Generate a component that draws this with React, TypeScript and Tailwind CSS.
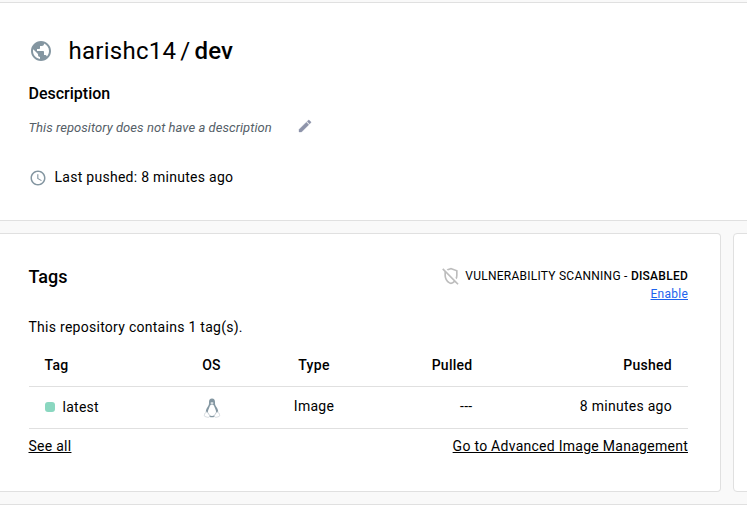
import { MdPublic, MdAccessTime, MdOutlineRemoveModerator } from 'react-icons/md';

function Pencil() {
  return (
    <svg className="mb-1 ml-[25.500px] size-4 text-[#8e94aa]" viewBox="0 0 24 24" fill="currentColor" stroke="currentColor" strokeWidth=".5">
      <path d="M3 17.250V21h3.750L17.810 9.940l-3.750-3.750L3 17.250ZM20.710 7.040a1 1 0 0 0 0-1.410l-2.340-2.340a1 1 0 0 0-1.410 0l-1.830 1.830 3.750 3.750 1.830-1.830Z" />
    </svg>
  );
}

function Tux() {
  return (
    <svg width="18" height="20" viewBox="0 0 18 20" fill="none">
      <path
        d="M9 .5C6.900.5 5.900 2 6 4.200c.1 2-.2 2.900-1.400 4.700-1.200 1.700-2.100 3.600-1.700 5.600.5 2.700 3 4.800 6.100 4.800s5.600-2.100 6.100-4.800c.4-2-.5-3.900-1.700-5.600C12.200 7.100 11.900 6.200 12 4.200 12.100 2 11.100.5 9 .5Z"
        fill="#8497a2"
      />
      <path d="M9 6.500c-1.800 0-2.100 1.700-2.800 3.300-.9 2-1.700 3.500-1 5.200.7 1.800 2 3 3.800 3s3.100-1.200 3.800-3c.7-1.700-.1-3.200-1-5.200C11.100 8.200 10.800 6.500 9 6.500Z" fill="#fff" />
      <path d="M7.200 4.900 9 4.100l1.800.8L9 6.200Z" fill="#e8ecee" />
      <path d="m4 13.700 2.700 3.900c.4 1.200-.8 2-2.400 1.600l-2.300-.7c-.8-.3-.7-1-.5-1.700.2-1.200.2-1.700.9-1.900.7-.2.700-.8 1.600-1.200Z" fill="#fff" stroke="#c5cdd2" strokeWidth=".7" />
      <path d="m14 13.700-2.700 3.900c-.4 1.200.8 2 2.400 1.600l2.300-.7c.8-.3.700-1 .5-1.700-.2-1.200-.2-1.700-.9-1.900-.7-.2-.7-.8-1.600-1.200Z" fill="#fff" stroke="#c5cdd2" strokeWidth=".7" />
    </svg>
  );
}

const columns = 'grid grid-cols-[116px_102px_103px_107px_1fr] items-center px-4';

export default function App() {
  return (
    <div className="h-[515px] w-[747px] overflow-hidden bg-[#f9f9f9] font-['Roboto',sans-serif] text-sm leading-5 tracking-[0.27px] text-black">
      <section className="mt-0.5 flex h-[219px] flex-col border-y border-[#e0e0e0] bg-white pl-[28.500px]">
        <h1 className="mt-[32px] flex h-8 items-center text-2xl leading-8 tracking-[0.27px]">
          <MdPublic className="mr-4 size-6 text-[#8496a1]" />
          <span>harishc14</span>
          <span className="mx-[4px]">/</span>
          <span className="font-medium tracking-[0.15px]">dev</span>
        </h1>
        <h2 className="mt-[15px] text-base leading-6 font-medium tracking-normal">Description</h2>
        <div className="mt-3 flex h-5 items-center text-[13px] text-[#556068] italic tracking-[0.05px]">
          <span>This repository does not have a description</span>
          <Pencil />
        </div>
        <div className="mt-[29px] flex h-5 items-center">
          <MdAccessTime className="mt-px mr-2 size-[18px] text-[#8496a1]" />
          <span>Last pushed: 8 minutes ago</span>
        </div>
      </section>
      <div className="mt-3 flex h-[259px] gap-3">
        <section className="w-[721px] shrink-0 rounded-r-sm border border-l-0 border-[#e0e0e0] bg-white pr-8 pl-[28.500px]">
          <div className="flex h-[83px] justify-between">
            <h2 className="mt-[31px] text-lg leading-6 font-medium tracking-normal">Tags</h2>
            <div className="mt-[31px] flex flex-col items-end text-xs leading-[18px] tracking-[0.25px]">
              <div className="flex items-center">
                <MdOutlineRemoveModerator className="mt-px mr-1 size-5 text-[#bdbdbd]" />
                <span>VULNERABILITY SCANNING - <span className="font-medium">DISABLED</span></span>
              </div>
              <a className="-mt-px text-[#1d63ed] underline">Enable</a>
            </div>
          </div>
          <p>This repository contains 1 tag(s).</p>
          <div className={`${columns} mt-[7px] h-[43px] border-b border-[#e0e0e0] font-medium`}>
            <span>Tag</span>
            <span className="text-center">OS</span>
            <span className="text-center">Type</span>
            <span className="text-right">Pulled</span>
            <span className="text-right">Pushed</span>
          </div>
          <div className={`${columns} h-[42px] border-b border-[#e0e0e0]`}>
            <span className="flex items-center">
              <i className="mr-2 mb-px size-2.5 rounded-[3px] bg-[#8ad7c0]" /><span className="pb-px">latest</span>
            </span>
            <span className="flex justify-center"><Tux /></span>
            <span className="pb-[3px] text-center">Image</span>
            <span className="pb-[3px] text-right">---</span>
            <span className="pb-[3px] text-right">8 minutes ago</span>
          </div>
          <div className="mt-[7px] flex justify-between">
            <a className="underline">See all</a>
            <a className="underline">Go to Advanced Image Management</a>
          </div>
        </section>
        <section className="w-10 shrink-0 rounded-l-sm border border-[#e0e0e0] bg-white" />
      </div>
      <div className="mt-3 h-6 border-t border-[#e0e0e0] bg-white" />
    </div>
  );
}
